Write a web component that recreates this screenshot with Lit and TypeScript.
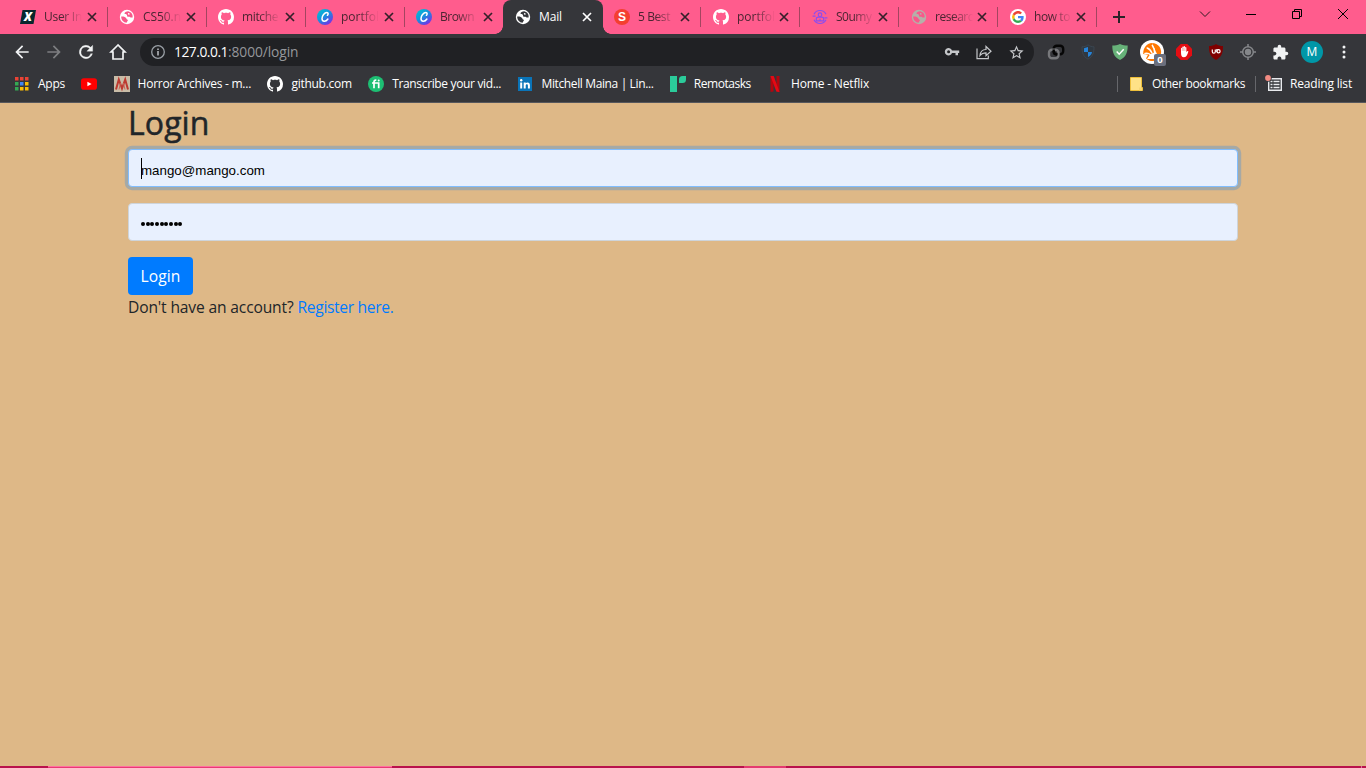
import { LitElement, html, svg, css } from "lit";
import { customElement, property } from "lit/decorators.js";

const s16 = (c: unknown) => html`<svg width="16" height="16" viewBox="0 0 16 16">${c}</svg>`;
const s24 = (c: unknown, size = 20) => html`<svg width=${size} height=${size} viewBox="0 0 24 24" fill="currentColor">${c}</svg>`;

const github = s16(svg`<path fill="#fff" d="M8 0C3.58 0 0 3.58 0 8c0 3.54 2.29 6.53 5.47 7.59.4.07.55-.17.55-.38 0-.19-.01-.82-.01-1.49-2.01.37-2.53-.49-2.69-.94-.09-.23-.48-.94-.82-1.13-.28-.15-.68-.52-.01-.53.63-.01 1.08.58 1.23.82.72 1.21 1.87.87 2.33.66.07-.52.28-.87.51-1.07-1.78-.2-3.64-.89-3.64-3.95 0-.87.31-1.59.82-2.15-.08-.2-.36-1.02.08-2.12 0 0 .67-.21 2.2.82.64-.18 1.32-.27 2-.27s1.36.09 2 .27c1.53-1.04 2.2-.82 2.2-.82.44 1.1.16 1.92.08 2.12.51.56.82 1.27.82 2.15 0 3.07-1.87 3.75-3.65 3.95.29.25.54.73.54 1.48 0 1.07-.01 1.93-.01 2.2 0 .21.15.46.55.38A8.01 8.01 0 0 0 16 8c0-4.42-3.58-8-8-8z"/>`);
const globe = (fg: string, bg: string) => s16(svg`<circle cx="8" cy="8" r="7.200" fill=${fg}/><path d="M9.200 2.300C7.300 2.500 5.300 3.500 5.500 4.600c.2 1 1.700.4 2.300 1.100.6.8-.2 1.500.8 2 .9.400 1.600-.3 2.300.3.600.6 1.500.8 2.700.4.500-2.600-.9-5.300-4.400-6.100z" fill=${bg}/><path d="M9.500 3.900c1.300.2 1.500 1 1 1.500-.6.500-1.500.2-1.600-.5-.1-.5.100-.9.600-1z" fill=${fg}/><path d="M2.200 7.600c1.100-.3 2-.2 3 .2 1.200.5 2.300 1.300 2.300 2.200 0 .7 1.400.3 1.400 1.300 0 .9-1 1.200-1.300 2.500-3.200-.1-5.500-2.900-5.400-6.200z" fill=${bg}/>`);
const canva = s16(svg`<defs><linearGradient id="cv" x1="0" y1="0" x2=".75" y2="1"><stop offset="0" stop-color="#00c9d0"/><stop offset=".5" stop-color="#1593dd"/><stop offset="1" stop-color="#7d2ae8"/></linearGradient></defs><circle cx="8" cy="8" r="8" fill="url(#cv)"/><path d="M10.400 6.300c1-.6 1.100-2.800-.5-2.800C7.500 3.500 5 6.700 5 9.600c0 3.500 3.800 3.500 5.900.4" fill="none" stroke="#fff" stroke-width="1.500" stroke-linecap="round"/>`);
const xIcon = s16(svg`<path d="M2.500 1H16l-2.500 14H0z" fill="#07272d"/><text x="8" y="12.300" text-anchor="middle" font-family="Open Sans, sans-serif" font-size="12" font-weight="800" font-style="italic" fill="#fff">X</text>`);
const sIcon = s16(svg`<circle cx="8" cy="8" r="8" fill="#f43f30"/><text x="8" y="12.300" text-anchor="middle" font-family="Liberation Sans, sans-serif" font-size="12" font-weight="700" fill="#fff">S</text>`);
const person = s16(svg`<g fill="none" stroke="#8b4df0" stroke-width="1.200"><path d="M2 5.200A6.700 6.700 0 0 1 14 5.200M14 10.800A6.700 6.700 0 0 1 2 10.800M.6 7.200h3M12.400 8.800h3"/><circle cx="8" cy="5.700" r="1.800"/><path d="M4.300 11.800V10c0-1.200 1-1.800 2.200-1.800h3c1.200 0 2.200.6 2.200 1.800v1.800zM8 9.800V12"/></g>`);
const google = s16(svg`<circle cx="8" cy="8" r="8" fill="#fff"/><g transform="translate(2.100 2.100) scale(.246)"><path fill="#4285F4" d="M46.98 24.550c0-1.570-.15-3.090-.38-4.550H24v9.020h12.940c-.58 2.960-2.260 5.480-4.780 7.180l7.730 6c4.510-4.180 7.090-10.360 7.090-17.650z"/><path fill="#EA4335" d="M24 9.500c3.540 0 6.710 1.220 9.210 3.600l6.850-6.850C35.900 2.380 30.470 0 24 0 14.620 0 6.510 5.380 2.560 13.220l7.980 6.190C12.430 13.720 17.740 9.500 24 9.500z"/><path fill="#FBBC05" d="M10.530 28.590A14.500 14.500 0 0 1 10.530 19.410l-7.980-6.190a24 24 0 0 0 0 21.560z"/><path fill="#34A853" d="M24 48c6.480 0 11.930-2.130 15.890-5.810l-7.730-6c-2.150 1.450-4.920 2.300-8.160 2.300-6.260 0-11.570-4.220-13.470-9.910l-7.980 6.190C6.510 42.620 14.620 48 24 48z"/></g>`);

const tabs = [
  { title: "User In", icon: xIcon, w: 38 },
  { title: "CS50.n", icon: globe("#fff", "#f9588a"), w: 38 },
  { title: "mitche", icon: github, w: 36 },
  { title: "portfol", icon: canva, w: 38 },
  { title: "Brown", icon: canva, w: 34 },
  { title: "Mail", icon: globe("#fff", "#35363a"), w: 23, active: true },
  { title: "5 Best", icon: sIcon, w: 32 },
  { title: "portfol", icon: github, w: 38 },
  { title: "S0umy", icon: person, w: 35.5 },
  { title: "researc", icon: globe("#b5b0a9", "#f9588a"), w: 38 },
  { title: "how to", icon: google, w: 36 },
];

const appsIcon = s16(svg`${["#ea4335", "#ea4335", "#ea4335", "#34a853", "#4285f4", "#fbbc04", "#34a853", "#fbbc04", "#fbbc04"].map(
  (c, i) => svg`<rect x=${1 + (i % 3) * 5} y=${1 + Math.floor(i / 3) * 5} width="3.500" height="3.500" fill=${c}/>`)}`);
const youtube = s16(svg`<rect y="2.300" width="16" height="11.400" rx="2.800" fill="#f00"/><path d="M6.400 5.700 10.600 8l-4.200 2.300z" fill="#fff"/>`);
const horror = s16(svg`<path fill="#c9bca7" d="M0 0h16v16H0z"/><path d="M2 13.500 4.800 3.500 8 12.500l3.200-9L14 13.500" fill="none" stroke="#bd3a30" stroke-width="2"/><path d="M5 13.500 6.500 7M11 13.500 9.500 7" fill="none" stroke="#cf6558" stroke-width="1"/>`);
const fi = s16(svg`<circle cx="8" cy="8" r="8" fill="#1dbf73"/><path d="M4 7h6.700v5.200M6 12.200V6c0-1.400.8-2 2.300-1.900" fill="none" stroke="#fff" stroke-width="1.700"/><circle cx="10.700" cy="4.500" r="1" fill="#fff"/>`);
const linkedin = s16(svg`<path fill="#0a74b8" d="M1 1h14v14H1z"/><path d="M3.200 6.500h2v6h-2zM6.700 6.500h2v.8c.9-1.400 4.200-1.400 4.200 1.700v3.500h-2V9.500c0-1.900-2.200-1.700-2.200 0v3h-2z" fill="#fff"/><circle cx="4.200" cy="4.300" r="1.200" fill="#fff"/>`);
const remo = s16(svg`<path fill="#2bcb9a" d="M0 0h7v16H0zM9 7V3.500A3.500 3.500 0 0 1 12.500 0H16v3.500A3.500 3.500 0 0 1 12.500 7z"/>`);
const netflix = s16(svg`<path d="M3.500 0h3v15.600l-3 .4zM9.500 0h3v16l-3-.4z" fill="#b1060f"/><path d="M3.500 0h3.200l5.800 16-3.200-.4z" fill="#e50914"/>`);
const folder = s16(svg`<path d="M2.500 1.500h11v10h1v3h-12z" fill="#ffe287" stroke="#eebf3a"/><path d="M11 11.500h3v3h-3z" fill="#f8d775"/>`);
const reading = html`<svg width="16" height="16" viewBox="0 0 16 16" overflow="visible"><path d="M2.700 2.700h12.600v11.600H2.700z" fill="none" stroke="#e8eaed" stroke-width="1.400"/><path d="M4.500 5.500h2M4.500 8.500h2M4.500 11.500h2M7.500 5.500h6M7.500 8.500h6M7.500 11.500h6" stroke="#e8eaed" stroke-width="1.500"/><circle cx="2" cy="2" r="3.800" fill="#35363a"/><circle cx="2" cy="2" r="2.900" fill="#f28b82"/></svg>`;

const bookmarks = [
  { label: "Apps", icon: appsIcon, w: 27 },
  { label: "", icon: youtube, w: 0 },
  { label: "Horror Archives - m...", icon: horror, w: 113.5 },
  { label: "github.com", icon: github, w: 60.5 },
  { label: "Transcribe your vid...", icon: fi, w: 109 },
  { label: "Mitchell Maina | Lin...", icon: linkedin, w: 112 },
  { label: "Remotasks", icon: remo, w: 57 },
  { label: "Home - Netflix", icon: netflix, w: 78 },
];

const extensions = [
  html`<svg width="18" height="18" viewBox="0 0 18 18" fill="none" stroke-width="2.400"><rect x="6.700" y="2.700" width="9.500" height="8.600" rx="3" stroke="#060606"/><rect x="2" y="6.700" width="9.500" height="8.600" rx="3" stroke="#77787b"/><path d="M6.700 6.500v2.300a2.500 2.500 0 0 0 2.500 2.500h1.200" stroke="#060606"/></svg>`,
  s16(svg`<path d="M8 .8c2 1.500 4 2 6 2 0 6-1 9.500-6 12.400C3 12.300 2 8.800 2 2.800c2 0 4-.5 6-2z" fill="#303840" stroke="#3b4650"/><path d="M4 4.200 8 3v5H4zM8 8h4c-.2 2-1.500 3.600-4 5z" fill="#2683d8"/>`),
  s16(svg`<path d="M8 0c2.500 1 5 1.500 7.700 1.500C15.700 8.500 14 13 8 16 2 13 .3 8.500.3 1.500 3 1.500 5.500 1 8 0z" fill="#67b279"/><path d="m4.700 7.600 2.500 2.600 4.500-5" fill="none" stroke="#fff" stroke-width="1.500"/>`),
  html`<span class="avast"><svg width="24" height="24" viewBox="0 0 24 24"><circle cx="12" cy="12" r="12" fill="#fff"/><path d="M12 3a9 9 0 1 1-6 15.600L9 13l1.500 2.500L17 14.500 12 3z" fill="#ff7800"/><path d="M3.200 14C3 8 6.500 3.500 12 3l3 9-5 3z" fill="#ff7800"/><path d="M5 13.500c2.300-.5 4-.1 5.500 1.200M7.200 8c2.300.8 3.700 2.500 4.700 5M12.300 5.500c1.700 2.200 2.400 4.500 2.400 7.500" stroke="#fff" stroke-width="1.500" stroke-linecap="round" fill="none"/><path d="m7 19 3-4.500 6-2.500 2 7z" fill="#fff"/></svg><b>0</b></span>`,
  s16(svg`<path d="M4.700 0h6.600L16 4.700v6.600L11.300 16H4.700L0 11.300V4.700z" fill="#e40d13"/><path d="M5 8V4.500c0-1 1.300-1 1.300 0V3.200c0-1 1.400-1 1.400 0v-.5c0-1 1.300-1 1.300 0v1c0-1 1.400-1 1.400 0v4.500c.8-1.600 2.200-1.300 1.900-.5-.7 2-1.500 5.500-4.300 5.500C5.500 13.200 5 11.500 5 8z" fill="#fff"/><path d="M6.300 4v3M7.700 3.500V7M9 3.500V7" stroke="#e40d13" stroke-width=".3"/>`),
  s16(svg`<path d="M8 0c2 1.500 4.500 2 7 2 0 7-1 10.500-7 14C2 12.500 1 9 1 2c2.500 0 5-.5 7-2z" fill="#800000"/><path d="M4.300 5.500v2.200c0 2 3 2 3 0V5.500M8.900 5v3" fill="none" stroke="#fff" stroke-width="1.200"/><circle cx="10.500" cy="7.200" r="1.600" fill="none" stroke="#fff" stroke-width="1.200"/>`),
  s16(svg`<g fill="none" stroke="#85878a" stroke-width="1.500"><circle cx="8" cy="8" r="5.300"/><path d="M8 0v3M8 13v3M0 8h3M13 8h3"/></g><circle cx="8" cy="8" r="3.200" fill="#85878a"/>`),
  s24(svg`<path d="M20.500 11H19V7c0-1.100-.9-2-2-2h-4V3.500a2.500 2.500 0 0 0-5 0V5H4c-1.100 0-1.990.9-1.990 2v3.800H3.500c1.490 0 2.700 1.210 2.700 2.700s-1.210 2.700-2.700 2.700H2V20c0 1.100.9 2 2 2h3.800v-1.500c0-1.490 1.210-2.700 2.700-2.700s2.700 1.210 2.700 2.700V22H17c1.100 0 2-.9 2-2v-4h1.500a2.500 2.500 0 0 0 0-5z"/>`, 17),
  html`<span class="avatar">M</span>`,
  s16(svg`<circle cx="8" cy="3" r="1.500" fill="#f1f3f4"/><circle cx="8" cy="8" r="1.500" fill="#f1f3f4"/><circle cx="8" cy="13" r="1.500" fill="#f1f3f4"/>`),
];

/** A single line of text whose tracking is spread to a given width. */
@customElement("fit-text")
class FitText extends LitElement {
  @property() text = "";
  @property({ type: Number }) w = 0;
  static styles = css`
    :host { display: inline-block; white-space: pre; }
    span { display: inline-block; }
  `;
  firstUpdated() {
    const el = this.renderRoot.querySelector("span") as HTMLElement;
    const natural = el.getBoundingClientRect().width;
    el.style.letterSpacing = `${(this.w - natural) / this.text.length}px`;
  }
  render() {
    return html`<span>${this.text}</span>`;
  }
}

@customElement("app-root")
class AppRoot extends LitElement {
  static styles = css`
    :host { display: flex; flex-direction: column; width: 1366px; height: 768px; overflow: hidden; background: #deb887; font-family: "Open Sans", "Noto Sans", sans-serif; }
    * { box-sizing: border-box; }
    svg { display: block; flex: none; }
    .tabs { display: flex; height: 34px; background: #ff5c8d; padding-left: 8px; flex: none; color: #4a2531; font-size: 12px; }
    .tab { width: 99px; height: 34px; display: flex; align-items: center; padding-left: 12px; position: relative; flex: none; }
    .tab.sep::after { content: ""; position: absolute; right: -1px; top: 7px; width: 1px; height: 20px; background: #a34560; }
    .tab.sep.late::after { right: 0; }
    .title { width: 38px; margin-left: 8px; overflow: hidden; height: 20px; line-height: 19px; mask-image: linear-gradient(90deg, #000 45%, transparent 100%); }
    .close { margin-left: 5px; }
    .late .close { margin-left: 4px; }
    .active { background: #35363a; color: #fff; border-radius: 8px 8px 0 0; width: 100px; margin-right: -1px; z-index: 1; }
    .active .title { mask-image: none; }
    .active::before, .active::after { content: ""; position: absolute; bottom: 0; width: 8px; height: 8px; }
    .active::before { left: -8px; background: radial-gradient(circle at 0 0, transparent 7.500px, #35363a 8px); }
    .active::after { right: -8px; background: radial-gradient(circle at 100% 0, transparent 7.500px, #35363a 8px); }
    .plus { margin: 10px 0 0 15px; height: 14px; }
    .window { margin-left: auto; display: flex; height: 28px; align-items: center; }
    .window span { width: 46px; display: flex; justify-content: center; }
    .bar { height: 36px; background: #35363a; display: flex; align-items: center; padding-left: 6px; flex: none; color: #f1f3f4; }
    .cell { width: 32px; height: 32px; display: flex; align-items: center; justify-content: center; flex: none; }
    .dim { color: #7d7e81; }
    .omni { width: 894px; height: 28px; border-radius: 14px; background: #202124; margin: 0 6px; display: flex; align-items: center; padding: 0 2px 0 10px; font-size: 13.800px; color: #c5c7ca; }
    .url { margin-left: 8px; display: flex; flex: 1; line-height: 20px; }
    .url .host { color: #fff; }
    .url .path { color: #95979b; }
    .avast { position: relative; display: block; }
    .avast b { position: absolute; left: 14px; top: 14px; width: 12px; height: 12px; border-radius: 2px; background: #6b6f7d; color: #fff; font-size: 9.500px; line-height: 12px; text-align: center; }
    .avatar { width: 22px; height: 22px; border-radius: 50%; background: #0097a7; color: #fff; font-size: 12px; line-height: 22px; text-align: center; }
    .marks { height: 33px; background: #35363a; border-bottom: 1px solid #56575c; display: flex; padding: 0 14px 5px 14px; align-items: center; gap: 16.300px; font-size: 12px; color: #fff; flex: none; }
    .mark { display: flex; align-items: center; gap: 8px; line-height: 18px; }
    .right { margin-left: auto; display: flex; align-items: center; gap: 10px; }
    .rule { width: 1px; height: 16px; background: #66676b; }
    main { flex: 1; padding: 0 128px; color: #212529; font-size: 15.600px; line-height: 24px; }
    h1 { margin: 0 0 8px; font-size: 32px; line-height: 38.400px; font-weight: 500; padding-top: 1px; height: 38.400px; -webkit-text-stroke: .5px #212529; }
    .field { height: 38px; border: 1px solid #ced4da; border-radius: 4px; background: #e8f0fe; width: 1110px; margin-bottom: 16px; padding: 0 12px; display: flex; align-items: center; color: #000; }
    .focus { border-color: #80bdff; box-shadow: 0 0 0 3.200px rgba(0, 123, 255, .25); }
    .mail { font-family: "Liberation Sans", Arial, sans-serif; font-size: 13.333px; padding-top: 5px; }
    .caret { width: 1px; height: 21px; background: #000; margin-right: -1px; }
    .dots { display: flex; gap: .67px; padding-top: 4px; }
    .dots i { width: 4px; height: 4px; border-radius: 50%; background: #000; }
    .btn { display: flex; align-items: center; justify-content: center; width: 65px; height: 38px; background: #007bff; color: #fff; border-radius: 4px; }
    .note { display: flex; gap: 4px; }
    .note a { color: #007bff; }
    .task { height: 2px; background: #b9124c; display: flex; flex: none; padding-left: 48px; }
    .run { width: 344px; background: #e83a73; border-top: 1px solid #ff70a0; }
    .run2 { margin-left: 352px; width: 42px; background: #e43b70; }
    .peek { margin-left: 575px; width: 1px; background: #d87898; }
  `;

  render() {
    return html`
      <div class="tabs">
        ${tabs.map((t, i) => html`<div class="tab ${t.active ? "active" : i === 4 ? "" : "sep"} ${i > 5 ? "late" : ""}">
          ${t.icon}<div class="title"><fit-text .text=${t.title} .w=${t.w}></fit-text></div>
          <svg class="close" width="10" height="10" viewBox="0 0 10 10"><path d="m1 1 8 8M9 1 1 9" stroke=${t.active ? "#fff" : "#35202a"} stroke-width="1.700"/></svg>
        </div>`)}
        <svg class="plus" width="14" height="14" viewBox="0 0 14 14"><path d="M7 1v12M1 7h12" stroke="#2b2328" stroke-width="2"/></svg>
        <div class="window">
          <span><svg width="12" height="12" viewBox="0 0 12 12"><path d="m1 3.500 5 5 5-5" fill="none" stroke="#2b1a20"/></svg></span>
          <span><svg width="10" height="10" viewBox="0 0 10 10"><path d="M0 5.500h10" stroke="#000"/></svg></span>
          <span><svg width="10" height="10" viewBox="0 0 10 10"><path d="M.5 2.500h7v7h-7zM2.500 2.500v-2h7v7h-2" fill="none" stroke="#000"/></svg></span>
          <span><svg width="10" height="10" viewBox="0 0 10 10"><path d="m0 0 10 10M10 0 0 10" stroke="#000"/></svg></span>
        </div>
      </div>
      <div class="bar">
        <span class="cell">${s24(svg`<path d="M20 11H7.830l5.590-5.590L12 4l-8 8 8 8 1.410-1.410L7.830 13H20v-2z"/>`, 20)}</span>
        <span class="cell dim">${s24(svg`<path d="m12 4-1.410 1.410L16.170 11H4v2h12.170l-5.580 5.590L12 20l8-8z"/>`, 20)}</span>
        <span class="cell">${s24(svg`<path d="M17.650 6.350A8 8 0 1 0 19.730 14h-2.080A6 6 0 1 1 12 6c1.660 0 3.140.69 4.220 1.780L13 11h7V4z" stroke="currentColor" stroke-width=".4"/>`, 20)}</span>
        <span class="cell"><svg width="18" height="18" viewBox="0 0 18 18"><path d="M9 2 2 9h2v7h10V9h2z" fill="none" stroke="#f1f3f4" stroke-width="1.700"/></svg></span>
        <div class="omni">
          <svg width="16" height="16" viewBox="0 0 16 16"><circle cx="8" cy="8" r="6.300" fill="none" stroke="#9aa0a6" stroke-width="1.300"/><path d="M8 7v4.500M8 4.500V6" stroke="#bcc0c4" stroke-width="1.500"/></svg>
          <div class="url"><fit-text class="host" .text=${"127.0.0.1"} .w=${54}></fit-text><fit-text class="path" .text=${":8000/login"} .w=${70.5}></fit-text></div>
          <span class="cell"><svg width="16" height="16" viewBox="0 0 16 16"><path fill-rule="evenodd" d="M8 6.500h7.200V9H14v2.300h-2.500V9H8a3.700 3.700 0 1 1 0-2.500zM4.600 6.200a1.500 1.500 0 1 0 0 3 1.500 1.500 0 0 0 0-3z" fill="#c5c7ca"/></svg></span>
          <span class="cell"><svg width="16" height="16" viewBox="0 0 16 16"><path d="M1 4.500v10.200h11.300V11.500M4 11.500c.4-4 2.500-6 6-6v-3l5 4.700-5 4.500V8.800c-2.700 0-4.500.8-6 2.700z" fill="none" stroke="#c5c7ca" stroke-width="1.200"/></svg></span>
          <span class="cell">${s24(svg`<path d="m22 9.240-7.190-.62L12 2 9.190 8.630 2 9.240l5.460 4.730L5.820 21 12 17.270 18.180 21l-1.630-7.030zM12 15.400l-3.760 2.270 1-4.280-3.320-2.880 4.380-.38L12 6.100l1.710 4.040 4.380.38-3.320 2.880 1 4.280z"/>`, 17)}</span>
        </div>
        ${extensions.map((e) => html`<span class="cell">${e}</span>`)}
      </div>
      <div class="marks">
        ${bookmarks.map((b) => html`<div class="mark">${b.icon}${b.label ? html`<fit-text .text=${b.label} .w=${b.w}></fit-text>` : ""}</div>`)}
        <div class="right">
          <i class="rule"></i>
          <div class="mark">${folder}<fit-text .text=${"Other bookmarks"} .w=${93}></fit-text></div>
          <i class="rule"></i>
          <div class="mark">${reading}<fit-text .text=${"Reading list"} .w=${62}></fit-text></div>
        </div>
      </div>
      <main>
        <h1><fit-text .text=${"Login"} .w=${81.5}></fit-text></h1>
        <div class="field focus"><i class="caret"></i><span class="mail">mango@mango.com</span></div>
        <div class="field"><span class="dots">${Array.from({ length: 9 }, () => html`<i></i>`)}</span></div>
        <div class="btn"><fit-text .text=${"Login"} .w=${40}></fit-text></div>
        <div class="note"><fit-text .text=${"Don't have an account?"} .w=${165.5}></fit-text><a><fit-text .text=${"Register here."} .w=${96}></fit-text></a></div>
      </main>
      <div class="task"><i class="run"></i><i class="run2"></i><i class="peek"></i></div>
    `;
  }
}
